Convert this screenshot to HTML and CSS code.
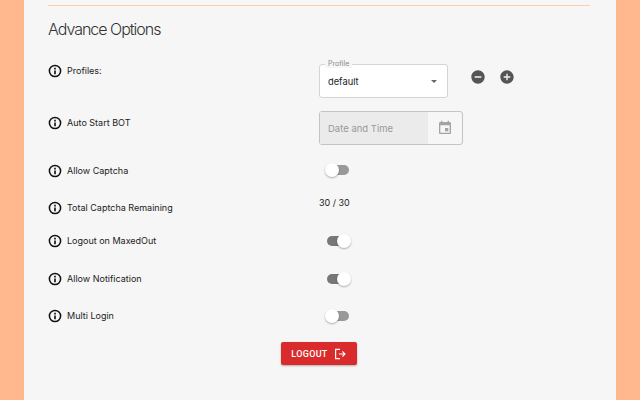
FILE: index.html
```html
<!DOCTYPE html>
<html lang="en">
<head>
    <meta charset="UTF-8">
    <title>Advance Options</title>
    <link rel="stylesheet" href="styles.css">
</head>
<body>
    <svg class="icon-defs">
        <symbol id="info" viewBox="0 0 24 24">
            <circle cx="12" cy="12" r="9.6" fill="none" stroke="#111" stroke-width="2.6"/>
            <path d="M10.600 6.600h2.800v2.800h-2.800zM10.600 11h2.800v6.400h-2.800z" fill="#111"/>
        </symbol>
    </svg>

    <div class="panel">
        <div class="divider"></div>
        <h2 class="title">Advance Options</h2>

        <div class="row row-profiles">
            <div class="label">
                <svg class="info"><use href="#info"/></svg>
                <span>Profiles:</span>
            </div>
            <div class="control control-profile">
                <div class="select">
                    <span class="select-legend">Profile</span>
                    <span>default</span>
                    <span class="caret"></span>
                </div>
                <svg class="round-icon icon-minus" viewBox="0 0 24 24"><path d="M12 2C6.48 2 2 6.48 2 12s4.480 10 10 10 10-4.480 10-10S17.520 2 12 2zm5 11H7v-2h10v2z"/></svg>
                <svg class="round-icon" viewBox="0 0 24 24"><path d="M12 2C6.48 2 2 6.48 2 12s4.480 10 10 10 10-4.480 10-10S17.520 2 12 2zm5 11h-4v4h-2v-4H7v-2h4V7h2v4h4v2z"/></svg>
            </div>
        </div>

        <div class="row row-start">
            <div class="label label-low">
                <svg class="info"><use href="#info"/></svg>
                <span>Auto Start BOT</span>
            </div>
            <div class="control">
                <div class="date-field">
                    <div class="date-input">Date and Time</div>
                    <div class="date-adorn">
                        <svg viewBox="0 0 24 24"><path d="M17 12h-5v5h5v-5zM16 1v2H8V1H6v2H5c-1.110 0-1.990.9-1.990 2L3 19c0 1.100.89 2 2 2h14c1.100 0 2-.9 2-2V5c0-1.100-.9-2-2-2h-1V1h-2zm3 18H5V8h14v11z"/></svg>
                    </div>
                </div>
            </div>
        </div>

        <div class="row row-captcha">
            <div class="label label-toggle">
                <svg class="info"><use href="#info"/></svg>
                <span>Allow Captcha</span>
            </div>
            <div class="control"><div class="toggle"><span class="track"></span><span class="thumb"></span></div></div>
        </div>

        <div class="row row-remaining">
            <div class="label label-toggle">
                <svg class="info"><use href="#info"/></svg>
                <span>Total Captcha Remaining</span>
            </div>
            <div class="control count">30 / 30</div>
        </div>

        <div class="row row-maxed">
            <div class="label">
                <svg class="info"><use href="#info"/></svg>
                <span>Logout on MaxedOut</span>
            </div>
            <div class="control"><div class="toggle on"><span class="track"></span><span class="thumb"></span></div></div>
        </div>

        <div class="row row-notify">
            <div class="label">
                <svg class="info"><use href="#info"/></svg>
                <span>Allow Notification</span>
            </div>
            <div class="control"><div class="toggle on"><span class="track"></span><span class="thumb"></span></div></div>
        </div>

        <div class="row row-multi">
            <div class="label">
                <svg class="info"><use href="#info"/></svg>
                <span>Multi Login</span>
            </div>
            <div class="control"><div class="toggle"><span class="track"></span><span class="thumb"></span></div></div>
        </div>

        <div class="actions">
            <button class="logout">
                <span>LOGOUT</span>
                <svg viewBox="0 0 24 24"><path d="M12 4H4.500v16H12M10 12h10M16 7.500l4.500 4.500-4.500 4.500"/></svg>
            </button>
        </div>
    </div>
</body>
</html>
```

FILE: styles.css
```css
html, body {
    height: 100%;
}
body {
    margin: 0;
    padding: 0 24px;
    background-color: #ffb78e;
    font-family: Inter, "Liberation Sans", sans-serif;
    color: #333;
    overflow: hidden;
}
.icon-defs {
    display: none;
}
.panel {
    height: 400px;
    box-sizing: border-box;
    padding: 5px 26px 0 24px;
    background-color: #f6f6f6;
}
.divider {
    height: 1px;
    background-color: #ffcdb0;
}
.title {
    margin: 13px 0 0;
    height: 45px;
    font-size: 16px;
    line-height: 21px;
    font-weight: 300;
    color: #333;
    letter-spacing: -1px;
}
.row {
    display: grid;
    grid-template-columns: 271px 1fr;
    align-items: start;
    box-sizing: border-box;
}
.row-profiles { height: 47px; }
.row-start { height: 52px; }
.row-captcha { height: 37px; }
.row-remaining { height: 34px; }
.row-maxed { height: 38px; }
.row-notify { height: 37px; }
.row-multi { height: 33px; }
.label {
    display: flex;
    align-items: center;
    gap: 5px;
    height: 14px;
    font-size: 9px;
    font-weight: 400;
    color: #222;
}
.label span {
    position: relative;
    top: -1px;
}
.label-low {
    margin-top: 5px;
}
.label-toggle {
    margin-top: 1px;
}
.info {
    width: 14px;
    height: 14px;
    flex-shrink: 0;
}
.control-profile {
    display: flex;
    align-items: flex-start;
}
.select {
    position: relative;
    display: flex;
    align-items: center;
    justify-content: space-between;
    box-sizing: border-box;
    width: 129px;
    height: 34px;
    padding: 0 8px;
    background-color: #fff;
    border: 1px solid #d4d4d4;
    border-radius: 3px;
    font-size: 9.3px;
    color: #222;
}
.select-legend {
    position: absolute;
    top: -5px;
    left: 5px;
    padding: 0 3px;
    background-color: #f6f6f6;
    font-size: 7px;
    line-height: 8px;
    color: #888;
}
.caret {
    width: 0;
    height: 0;
    margin-right: 2px;
    border-left: 3.5px solid transparent;
    border-right: 3.5px solid transparent;
    border-top: 3.5px solid #666;
}
.round-icon {
    width: 16px;
    height: 16px;
    margin-left: 13px;
    margin-top: 5px;
    fill: #555;
}
.icon-minus {
    margin-left: 22px;
}
.date-field {
    display: flex;
    box-sizing: border-box;
    width: 144px;
    height: 34px;
    background-color: #f6f6f6;
    border: 1px solid #c4c4c4;
    border-radius: 3px;
}
.date-input {
    display: flex;
    align-items: center;
    width: 108px;
    padding-left: 8px;
    box-sizing: border-box;
    background-color: #ebebeb;
    font-size: 9.5px;
    color: #999;
}
.date-adorn {
    flex: 1;
    display: flex;
    align-items: center;
    justify-content: center;
}
.date-adorn svg {
    width: 16px;
    height: 16px;
    fill: #a3a3a3;
}
.toggle {
    position: relative;
    width: 26px;
    height: 14px;
    margin-left: 6px;
}
.track {
    position: absolute;
    top: 2px;
    left: 2px;
    width: 22px;
    height: 10px;
    border-radius: 5px;
    background-color: #999;
}
.thumb {
    position: absolute;
    top: 0;
    left: 0;
    width: 14px;
    height: 14px;
    border-radius: 50%;
    background-color: #fff;
    box-shadow: 0 1px 2px rgba(0, 0, 0, 0.3);
}
.toggle.on .track {
    background-color: #777;
}
.toggle.on .thumb {
    left: 12px;
}
.count {
    font-size: 9px;
    color: #222;
    margin-top: -3px;
}
.actions {
    display: flex;
    justify-content: flex-start;
    padding-left: 233px;
}
.logout {
    display: flex;
    align-items: center;
    justify-content: center;
    gap: 5px;
    box-sizing: border-box;
    width: 76px;
    height: 23px;
    padding: 0;
    border: none;
    border-radius: 2px;
    background-color: #d92b2b;
    box-shadow: 0 1px 2px rgba(0, 0, 0, 0.3);
    color: #fff;
    font-family: Roboto, sans-serif;
    font-size: 9px;
    font-weight: 500;
    letter-spacing: 0.3px;
}
.logout svg {
    width: 14px;
    height: 14px;
    fill: none;
    stroke: #fff;
    stroke-width: 2;
}
```
